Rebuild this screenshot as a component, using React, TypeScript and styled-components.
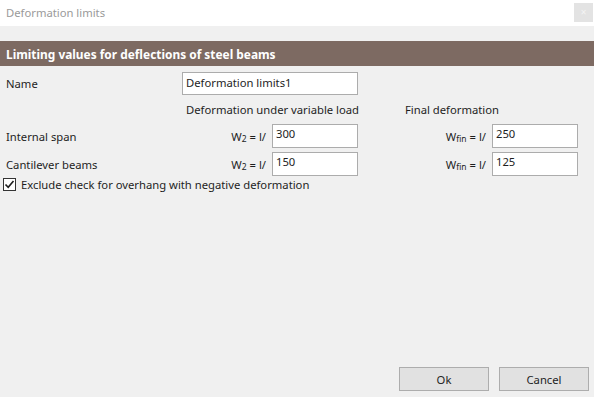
import React, { useState } from 'react';
import styled, { createGlobalStyle } from 'styled-components';

const GlobalStyle = createGlobalStyle`
  html, body {
    margin: 0;
    padding: 0;
    background: #f0f0f0;
  }
  body {
    font-family: 'Noto Sans', 'Open Sans', sans-serif;
    font-size: 11.25px;
    color: #1e1e1e;
  }
`;

interface DeflectionRow {
  label: string;
  variable: string;
  final: string;
}

const initialRows: DeflectionRow[] = [
  { label: 'Internal span', variable: '300', final: '250' },
  { label: 'Cantilever beams', variable: '150', final: '125' },
];

const App = () => {
  const [name, setName] = useState('Deformation limits1');
  const [rows, setRows] = useState(initialRows);
  const [excludeOverhang, setExcludeOverhang] = useState(true);

  const updateRow = (index: number, key: 'variable' | 'final', value: string) => {
    const next = [...rows];
    next[index] = { ...next[index], [key]: value };
    setRows(next);
  };

  return (
    <>
      <GlobalStyle />
      <Window>
        <TitleBar>
          <Title>Deformation limits</Title>
          <CloseButton aria-label='Close'>×</CloseButton>
        </TitleBar>
        <SectionHeader>Limiting values for deflections of steel beams</SectionHeader>
        <Form onSubmit={e => e.preventDefault()}>
          <Grid>
            <Label>Name</Label>
            <NameInput value={name} onChange={e => setName(e.target.value)} />
            <span />

            <span />
            <ColumnHead>Deformation under variable load</ColumnHead>
            <ColumnHead $final>Final deformation</ColumnHead>

            {rows.map((row, i) => (
              <React.Fragment key={row.label}>
                <Label>{row.label}</Label>
                <ValueCell>
                  <Symbol>
                    W<Sub>2</Sub> = l/
                  </Symbol>
                  <ValueInput
                    value={row.variable}
                    onChange={e => updateRow(i, 'variable', e.target.value)}
                  />
                </ValueCell>
                <ValueCell $final>
                  <Symbol>
                    W<Sub>fin</Sub> = l/
                  </Symbol>
                  <ValueInput
                    value={row.final}
                    onChange={e => updateRow(i, 'final', e.target.value)}
                  />
                </ValueCell>
              </React.Fragment>
            ))}
          </Grid>
          <CheckRow onClick={() => setExcludeOverhang(!excludeOverhang)}>
            <Box>
              {excludeOverhang && (
                <svg width='11' height='11' viewBox='0 0 11 11'>
                  <path d='M1.5 5.5 L4.2 8.3 L9.5 2' fill='none' stroke='#1e1e1e' strokeWidth='1.6' />
                </svg>
              )}
            </Box>
            Exclude check for overhang with negative deformation
          </CheckRow>
        </Form>
        <Footer>
          <Button type='button'>Ok</Button>
          <Button type='button'>Cancel</Button>
        </Footer>
      </Window>
    </>
  );
};

const Window = styled.div`
  display: flex;
  flex-direction: column;
  height: 100vh;
  background: #f0f0f0;
`;

const TitleBar = styled.div`
  display: flex;
  align-items: center;
  justify-content: space-between;
  height: 26px;
  padding: 0 1px 0 6px;
  background: #ffffff;
  box-sizing: border-box;
`;

const Title = styled.span`
  color: #9a9a9a;
  font-size: 11.25px;
  padding-bottom: 1px;
`;

const CloseButton = styled.span`
  width: 19px;
  height: 19px;
  margin-bottom: 1px;
  background: #e3e3e3;
  color: #f4f4f4;
  font-size: 10px;
  text-align: center;
  line-height: 19px;
`;

const SectionHeader = styled.div`
  margin-top: 15px;
  height: 25px;
  padding-left: 6px;
  background: #7d6a62;
  color: #ffffff;
  font-weight: 700;
  font-size: 11.9px;
  line-height: 26px;
`;

const Form = styled.form`
  flex: 1;
  padding: 6px 0 0 6px;
`;

const Grid = styled.div`
  display: grid;
  grid-template-columns: 176px 176px 220px;
  grid-template-rows: 23px 21px 24px 24px;
  row-gap: 4px;
  align-items: center;
`;

const Label = styled.span`
  white-space: nowrap;
`;

const ColumnHead = styled.span<{ $final?: boolean }>`
  padding-left: ${p => (p.$final ? '47px' : '4px')};
  white-space: nowrap;
`;

const NameInput = styled.input`
  box-sizing: border-box;
  width: 176px;
  height: 23px;
  padding: 0 3px 2px;
  border: 1px solid #acacac;
  background: #ffffff;
  font: inherit;
  color: #1e1e1e;
  outline: none;
`;

const ValueCell = styled.div<{ $final?: boolean }>`
  display: flex;
  align-items: center;
  justify-content: flex-end;
  gap: 6px;
  width: 176px;
  margin-left: ${p => (p.$final ? '44px' : '0')};
`;

const Symbol = styled.span`
  white-space: nowrap;
`;

const Sub = styled.span`
  font-size: 8.5px;
  vertical-align: -1px;
`;

const ValueInput = styled.input`
  box-sizing: border-box;
  width: 86px;
  height: 24px;
  padding: 0 3px 5px;
  border: 1px solid #acacac;
  background: #ffffff;
  font: inherit;
  color: #1e1e1e;
  outline: none;
`;

const CheckRow = styled.label`
  display: flex;
  align-items: center;
  gap: 5px;
  margin: 1px 0 0 -3px;
  cursor: default;
  white-space: nowrap;
`;

const Box = styled.span`
  display: flex;
  align-items: center;
  justify-content: center;
  width: 13px;
  height: 13px;
  box-sizing: border-box;
  border: 1px solid #333333;
  background: #ffffff;
`;

const Footer = styled.div`
  display: flex;
  justify-content: flex-end;
  gap: 10px;
  padding: 0 5px 6px 0;
`;

const Button = styled.button`
  width: 90px;
  height: 24px;
  border: 1px solid #adadad;
  background: #e1e1e1;
  font: inherit;
  color: #1e1e1e;
  padding: 0;
`;

export default App;
